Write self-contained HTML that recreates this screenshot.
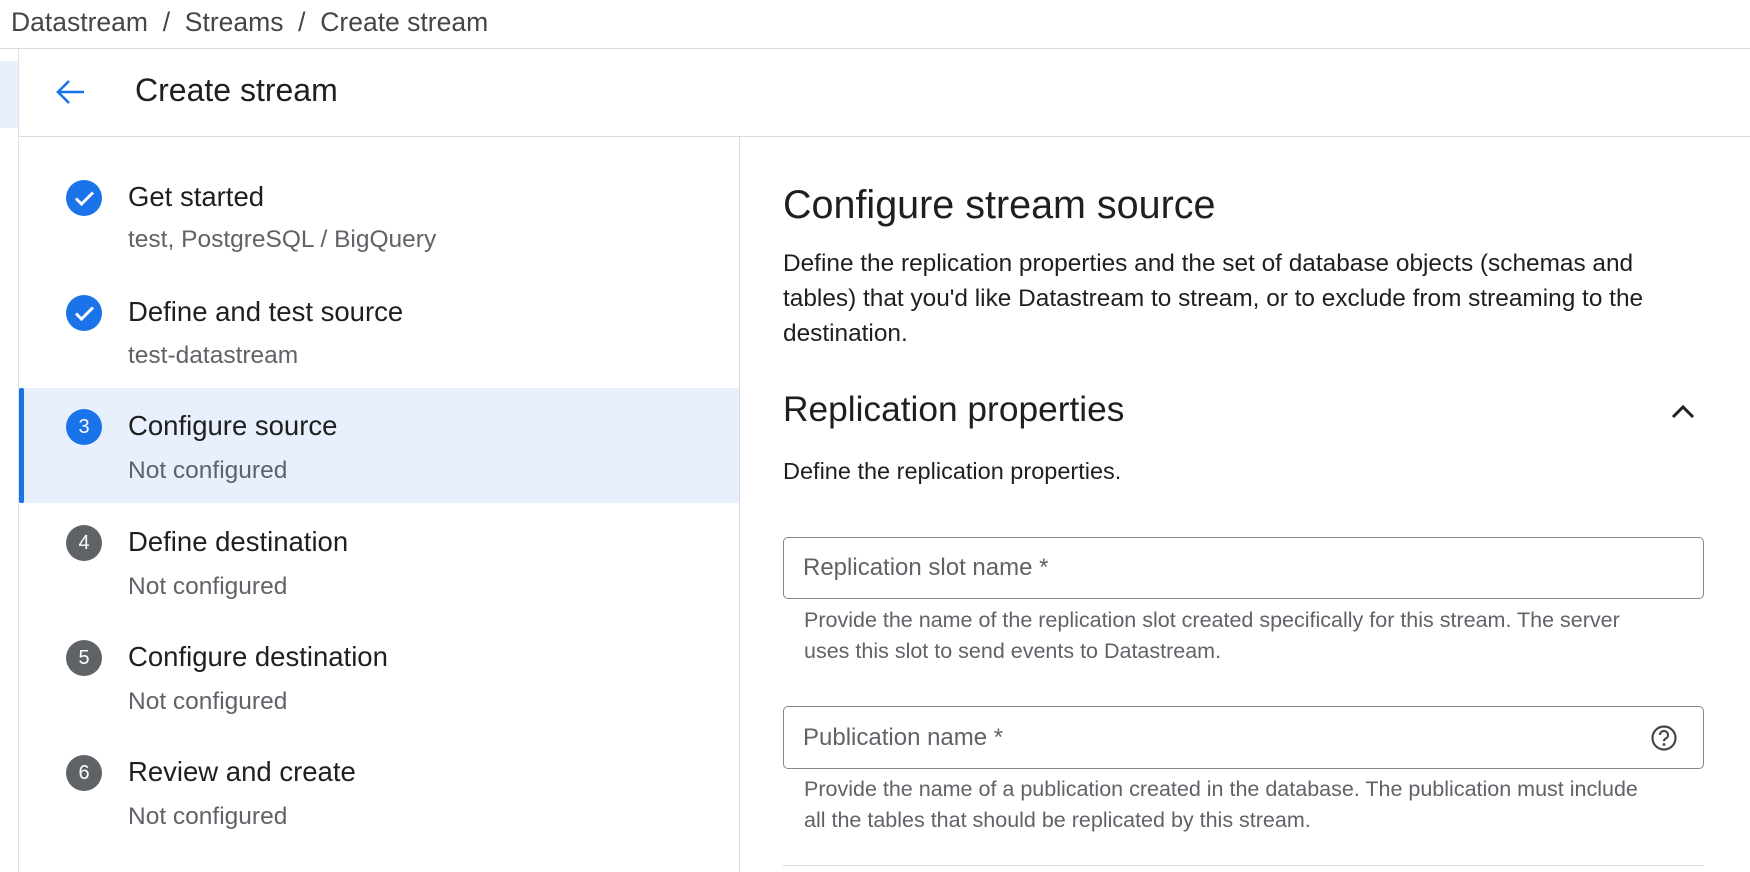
<!DOCTYPE html>
<html><head><meta charset="utf-8"><style>
*{margin:0;padding:0;box-sizing:border-box}
body{width:1750px;height:872px;overflow:hidden;background:#fff;font-family:"Liberation Sans",Arial,sans-serif;color:#1f1f1f;position:relative}
.a{position:absolute;white-space:nowrap}
.ic{position:absolute;width:36px;height:36px;border-radius:50%;left:66px;color:#fff;font-size:20px;text-align:center;line-height:36px}
.t{position:absolute;left:128px;font-size:27.5px;color:#1f1f1f;white-space:nowrap}
.s{position:absolute;left:128px;font-size:24.5px;color:#5f6368;white-space:nowrap}
.help{font-size:21.5px;color:#5f6368;line-height:31px}
.inp{position:absolute;left:783px;width:921px;border:1.5px solid #80868b;border-radius:5px}
</style></head><body>
<div class="a" style="left:11px;top:7px;font-size:26.5px;color:#444746">Datastream&nbsp;&nbsp;/&nbsp;&nbsp;Streams&nbsp;&nbsp;/&nbsp;&nbsp;Create stream</div>
<div class="a" style="left:0;top:48px;width:1750px;height:1px;background:#dadce0"></div>
<div class="a" style="left:0;top:61px;width:19px;height:67px;background:#e8f0fe"></div>
<div class="a" style="left:18px;top:48px;width:1px;height:824px;background:#e0e0e0"></div>
<svg class="a" style="left:54px;top:78px" width="32" height="28" viewBox="0 0 32 28"><path d="M30 14H4M15 3L4 14l11 11" fill="none" stroke="#1a73e8" stroke-width="2.6"/></svg>
<div class="a" style="left:135px;top:72px;font-size:32px">Create stream</div>
<div class="a" style="left:19px;top:136px;width:1731px;height:1px;background:#dadce0"></div>
<div class="a" style="left:739px;top:137px;width:1px;height:735px;background:#dadce0"></div>
<div class="a" style="left:19px;top:388px;width:720px;height:115px;background:#e8f0fe"></div>
<div class="a" style="left:19px;top:388px;width:5px;height:115px;background:#1a73e8;border-radius:2px"></div>

<div class="ic" style="top:180px;background:#1a73e8"><svg width="36" height="36" viewBox="0 0 36 36" style="position:absolute;left:0;top:0"><path d="M10 18.5l5.5 5.5L27 12.5" fill="none" stroke="#fff" stroke-width="3"/></svg></div>
<div class="t" style="top:181px">Get started</div><div class="s" style="top:226px">test, PostgreSQL / BigQuery</div>
<div class="ic" style="top:295px;background:#1a73e8"><svg width="36" height="36" viewBox="0 0 36 36" style="position:absolute;left:0;top:0"><path d="M10 18.5l5.5 5.5L27 12.5" fill="none" stroke="#fff" stroke-width="3"/></svg></div>
<div class="t" style="top:296px">Define and test source</div><div class="s" style="top:342px">test-datastream</div>
<div class="ic" style="top:409px;background:#1a73e8">3</div>
<div class="t" style="top:410px">Configure source</div><div class="s" style="top:457px">Not configured</div>
<div class="ic" style="top:525px;background:#5f6368">4</div>
<div class="t" style="top:526px">Define destination</div><div class="s" style="top:573px">Not configured</div>
<div class="ic" style="top:640px;background:#5f6368">5</div>
<div class="t" style="top:641px">Configure destination</div><div class="s" style="top:688px">Not configured</div>
<div class="ic" style="top:755px;background:#5f6368">6</div>
<div class="t" style="top:756px">Review and create</div><div class="s" style="top:803px">Not configured</div>

<div class="a" style="left:783px;top:183px;font-size:39.5px">Configure stream source</div>
<div class="a" style="left:783px;top:246px;font-size:24.4px;line-height:35px">Define the replication properties and the set of database objects (schemas and<br>tables) that you'd like Datastream to stream, or to exclude from streaming to the<br>destination.</div>
<div class="a" style="left:783px;top:390px;font-size:35.3px">Replication properties</div>
<svg class="a" style="left:1669px;top:401px" width="28" height="20" viewBox="0 0 28 20"><path d="M4 16L14 6l10 10" fill="none" stroke="#1f1f1f" stroke-width="3"/></svg>
<div class="a" style="left:783px;top:458px;font-size:23.5px">Define the replication properties.</div>
<div class="inp" style="top:537px;height:62px"><div class="a" style="left:19px;top:16px;font-size:24px;color:#5f6368">Replication slot name *</div></div>
<div class="a help" style="left:804px;top:605px">Provide the name of the replication slot created specifically for this stream. The server<br>uses this slot to send events to Datastream.</div>
<div class="inp" style="top:706px;height:63px"><div class="a" style="left:19px;top:17px;font-size:24px;color:#5f6368">Publication name *</div>
<svg class="a" style="left:866px;top:17px" width="28" height="28" viewBox="0 0 28 28"><circle cx="14" cy="14" r="11.5" fill="none" stroke="#444746" stroke-width="2.2"/><path d="M10 11a4 4 0 1 1 5.5 3.7c-1 .5-1.5 1.2-1.5 2.5" fill="none" stroke="#444746" stroke-width="2.2"/><circle cx="14" cy="20.5" r="1.4" fill="#444746"/></svg></div>
<div class="a help" style="left:804px;top:774px">Provide the name of a publication created in the database. The publication must include<br>all the tables that should be replicated by this stream.</div>
<div class="a" style="left:783px;top:865px;width:921px;height:1px;background:#dadce0"></div>
</body></html>
